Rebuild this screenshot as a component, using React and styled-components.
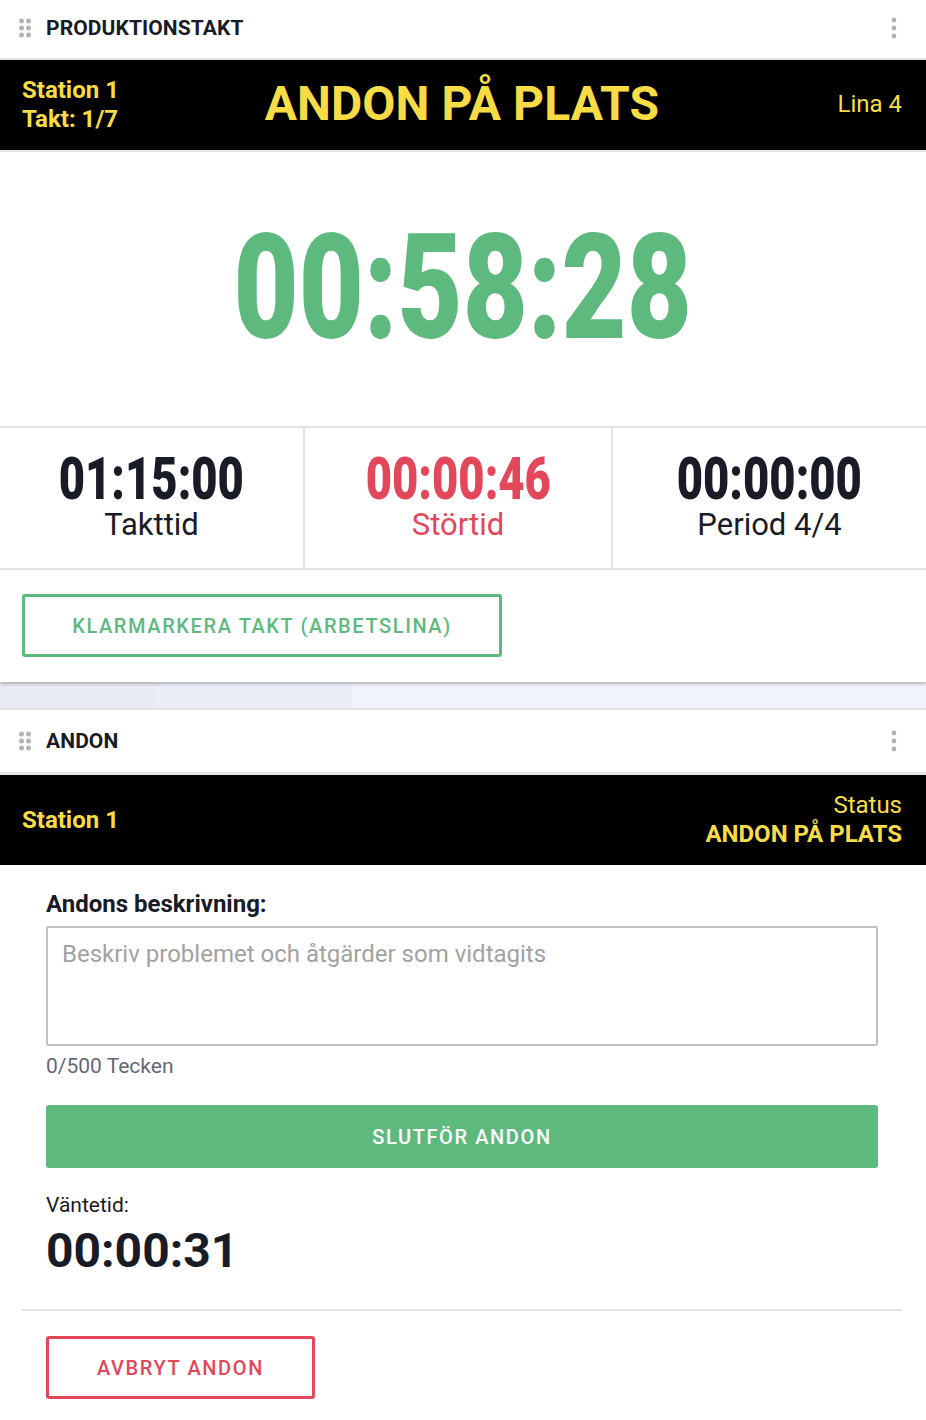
import React from "react";
import styled, { createGlobalStyle } from "styled-components";

const YELLOW = "#f8dc46";
const GREEN = "#5eb97e";
const RED = "#e2475a";
const DARK = "#191b26";

const GlobalStyle = createGlobalStyle`
  * { box-sizing: border-box; }
  body {
    margin: 0;
    background: #ffffff;
    font-family: Roboto, "Liberation Sans", Arial, sans-serif;
    color: ${DARK};
  }
`;

const Page = styled.div`
  width: 926px;
  display: flex;
  flex-direction: column;
`;

const Panel = styled.section`
  background: #fff;
  display: flex;
  flex-direction: column;
  box-shadow: ${(p) => (p.shadow ? "0 2px 3px rgba(0,0,0,0.25)" : "none")};
  position: relative;
`;

const PanelHeader = styled.header`
  height: ${(p) => p.h}px;
  display: flex;
  align-items: center;
  padding: 0 29px ${(p) => p.pb || 0}px 18px;
  border-bottom: ${(p) => p.border}px solid #e3e3e3;
`;

const Handle = styled.svg`
  width: 14px;
  height: 22px;
  margin-right: 14px;
  flex: none;
`;

const PanelTitle = styled.h2`
  margin: 0;
  font-size: 21px;
  font-weight: 700;
  flex: 1;
  letter-spacing: 0.1px;
`;

const Kebab = styled.svg`
  width: 6px;
  height: 22px;
`;

const BlackBar = styled.div`
  background: #000;
  height: ${(p) => 90 + p.border}px;
  display: grid;
  grid-template-columns: 1fr auto 1fr;
  align-items: center;
  padding: 0 24px 0 22px;
  color: ${YELLOW};
  border-bottom: ${(p) => p.border}px solid #e3e3e3;
`;

const BarLeft = styled.div`
  font-size: 24px;
  font-weight: 700;
  line-height: 29px;
`;

const BarTitle = styled.h1`
  margin: 0 0 3px;
  font-size: 48px;
  font-weight: 700;
  letter-spacing: 0.1px;
`;

const BarRight = styled.div`
  justify-self: end;
  text-align: right;
  font-size: 24px;
  line-height: 29px;
  margin-bottom: ${(p) => p.mb || 0}px;
`;

const TimerArea = styled.div`
  height: 276px;
  display: flex;
  align-items: center;
  justify-content: center;
  border-bottom: 2px solid #e3e3e3;
`;

const Condensed = styled.span`
  display: inline-block;
  font-weight: 900;
  transform: scaleX(0.77);
  transform-origin: center;
  font-size: ${(p) => p.size}px;
  line-height: 1;
  color: ${(p) => p.color || DARK};
`;

const StatsRow = styled.div`
  display: grid;
  grid-template-columns: 303px 2px 306px 2px 1fr;
  height: 142px;
  border-bottom: 2px solid #e3e3e3;
`;

const Divider = styled.div`
  background: #e3e3e3;
`;

const Stat = styled.div`
  display: flex;
  flex-direction: column;
  align-items: center;
  justify-content: flex-start;
  padding-top: 21px;
  color: ${(p) => p.color || DARK};
`;

const StatLabel = styled.div`
  font-size: 31px;
  line-height: 34px;
`;

const ButtonRow = styled.div`
  padding: 24px 22px 25px;
`;

const OutlineButton = styled.button`
  font-family: inherit;
  height: 63px;
  width: ${(p) => p.w}px;
  background: #fff;
  border: 3px solid ${(p) => p.color};
  border-radius: 3px;
  color: ${(p) => p.color};
  font-size: 20px;
  font-weight: 500;
  letter-spacing: 1.6px;
  text-transform: uppercase;
  padding: 0;
`;

const Gap = styled.div`
  height: 28px;
  display: grid;
  grid-template-columns: 155px 197px 1fr;
  border-bottom: 2px solid #e4e4e6;
`;

const GapCell = styled.div`
  background: ${(p) => p.bg};
`;

const Content = styled.div`
  padding: 24px 48px 30px 46px;
  display: flex;
  flex-direction: column;
`;

const FieldLabel = styled.label`
  font-size: 24px;
  font-weight: 700;
  line-height: 30px;
  margin-bottom: 7px;
`;

const TextArea = styled.textarea`
  font-family: inherit;
  width: 832px;
  height: 120px;
  border: 2px solid #c2c2c2;
  border-radius: 2px;
  resize: none;
  padding: 12px 14px;
  font-size: 24px;
  color: ${DARK};
  &::placeholder {
    color: #a2a2a2;
  }
`;

const Counter = styled.div`
  font-size: 21px;
  color: #666875;
  margin-top: 8px;
  line-height: 24px;
`;

const SolidButton = styled.button`
  font-family: inherit;
  margin-top: 27px;
  height: 63px;
  width: 832px;
  background: ${GREEN};
  border: none;
  border-radius: 3px;
  color: #fff;
  font-size: 20px;
  font-weight: 500;
  letter-spacing: 1.6px;
`;

const WaitLabel = styled.div`
  font-size: 21px;
  margin-top: 25px;
  line-height: 24px;
`;

const WaitTime = styled.div`
  font-size: 48px;
  font-weight: 700;
  line-height: 56px;
  margin-top: 6px;
`;

const Rule = styled.hr`
  margin: 0 24px 0 22px;
  border: none;
  border-top: 2px solid #e5e5e5;
`;

const FooterRow = styled.div`
  padding: 25px 46px 22px;
`;

function DragHandle() {
  return (
    <Handle viewBox="0 0 14 22">
      {[4, 11, 18].map((y) =>
        [3.5, 10.5].map((x) => <circle key={`${x}-${y}`} cx={x} cy={y} r="2.5" fill="#b3b3b6" />)
      )}
    </Handle>
  );
}

function MoreIcon() {
  return (
    <Kebab viewBox="0 0 6 22">
      {[3, 11, 19].map((y) => (
        <circle key={y} cx="3" cy={y} r="2.4" fill="#b3b3b6" />
      ))}
    </Kebab>
  );
}

export default function App() {
  return (
    <Page>
      <GlobalStyle />
      <Panel shadow>
        <PanelHeader h={60} border={2} pb={3}>
          <DragHandle />
          <PanelTitle>PRODUKTIONSTAKT</PanelTitle>
          <MoreIcon />
        </PanelHeader>
        <BlackBar border={2}>
          <BarLeft>
            Station 1
            <br />
            Takt: 1/7
          </BarLeft>
          <BarTitle>ANDON PÅ PLATS</BarTitle>
          <BarRight mb={2}>Lina 4</BarRight>
        </BlackBar>
        <TimerArea>
          <Condensed size={146} color={GREEN}>
            00:58:28
          </Condensed>
        </TimerArea>
        <StatsRow>
          <Stat>
            <Condensed size={59}>01:15:00</Condensed>
            <StatLabel>Takttid</StatLabel>
          </Stat>
          <Divider />
          <Stat color={RED}>
            <Condensed size={59} color={RED}>
              00:00:46
            </Condensed>
            <StatLabel>Störtid</StatLabel>
          </Stat>
          <Divider />
          <Stat>
            <Condensed size={59}>00:00:00</Condensed>
            <StatLabel>Period 4/4</StatLabel>
          </Stat>
        </StatsRow>
        <ButtonRow>
          <OutlineButton w={480} color={GREEN}>
            Klarmarkera takt (arbetslina)
          </OutlineButton>
        </ButtonRow>
      </Panel>
      <Gap>
        <GapCell bg="#e9ebf3" />
        <GapCell bg="#ebeef7" />
        <GapCell bg="#f0f3fa" />
      </Gap>
      <Panel>
        <PanelHeader h={65} border={3}>
          <DragHandle />
          <PanelTitle>ANDON</PanelTitle>
          <MoreIcon />
        </PanelHeader>
        <BlackBar border={0}>
          <BarLeft>Station 1</BarLeft>
          <span />
          <BarRight>
            Status
            <br />
            <b>ANDON PÅ PLATS</b>
          </BarRight>
        </BlackBar>
        <Content>
          <FieldLabel>Andons beskrivning:</FieldLabel>
          <TextArea placeholder="Beskriv problemet och åtgärder som vidtagits" />
          <Counter>0/500 Tecken</Counter>
          <SolidButton>SLUTFÖR ANDON</SolidButton>
          <WaitLabel>Väntetid:</WaitLabel>
          <WaitTime>00:00:31</WaitTime>
        </Content>
        <Rule />
        <FooterRow>
          <OutlineButton w={269} color={RED}>
            Avbryt andon
          </OutlineButton>
        </FooterRow>
      </Panel>
    </Page>
  );
}
